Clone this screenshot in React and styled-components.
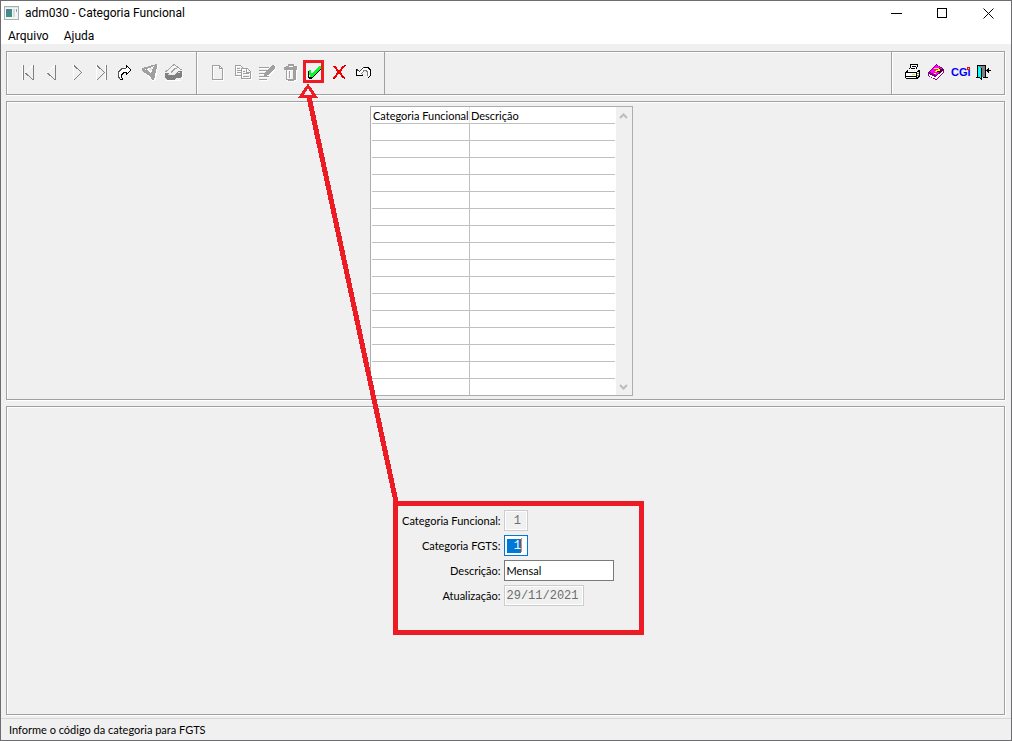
import React, { useEffect, useLayoutEffect, useRef, useState } from 'react'
import styled, { createGlobalStyle } from 'styled-components'

const LINHAS = 16

// desenho desabilitado: sombra branca deslocada por baixo do cinza
const Relevo = ({ children }) => (
    <>
        <g transform="translate(1 1)" color="#ffffff">{children}</g>
        <g color="#a0a0a0">{children}</g>
    </>
)

const Icone = ({ children }) => (
    <Svg width="24" height="24" viewBox="0 0 24 24" fill="none" shapeRendering="crispEdges" aria-hidden="true">
        {children}
    </Svg>
)

const IconePrimeiro = () => (
    <Icone>
        <path d="M6.5 5v15M17 5.5L9.5 12.5" stroke="#fff" />
        <path d="M7.5 5v15M17.5 5v15M9.5 13L17 20" stroke="#808080" />
    </Icone>
)

const IconeAnterior = () => (
    <Icone>
        <path d="M15 5.5L7.5 12.5" stroke="#fff" />
        <path d="M15.5 5v15M7.5 13L15 20" stroke="#808080" />
    </Icone>
)

const IconeProximo = () => (
    <Icone>
        <path d="M9.5 5v15" stroke="#fff" />
        <path d="M10 5.5L17.5 12.5L10 20" stroke="#808080" />
    </Icone>
)

const IconeUltimo = () => (
    <Icone>
        <path d="M8.5 5v15M17.5 5v15" stroke="#fff" />
        <path d="M9 5.5L16.5 12.5L9 20M18.5 5v15" stroke="#808080" />
    </Icone>
)

const IconeIr = () => (
    <Icone>
        <path d="M14 5L19 10L14 15V12H12L10 14V17L11 19L8 18L6 15V13L10 8H14Z" fill="#fff" />
        <path d="M14.5 8V5.5L19 10L14.5 14.5V12.5H12L9.5 15V17L11 19.5" stroke="#000" />
        <path d="M14 8.5H10L6.5 12V17L8 19" stroke="#555" />
        <path d="M8 19h3v1h-3z" fill="#000" />
    </Icone>
)

const IconeFiltro = () => (
    <Icone>
        <path d="M7 9L22 5L20 20L17 21L6 11Z" fill="#fff" />
        <path d="M6 8L21 4V7L18 20H16L15 17L6 11ZM11 9L15 14L17 7Z" fill="#a0a0a0" fillRule="evenodd" />
        <path d="M12 9L16 8L15 12Z" fill="#e4e4e4" />
        <path d="M9 9h1M12 8h1M15 7h1M17 6h1" stroke="#fff" />
    </Icone>
)

const IconeArquivo = () => (
    <Icone>
        <path d="M6 20h15v1H6zM22 12h1v7h-1z" fill="#fff" />
        <path d="M6 12L14 5L21 9L16 12H13L9 14Z" fill="#f4f4f4" />
        <path d="M5.5 12L14 4.5L21.5 10" stroke="#a0a0a0" />
        <path d="M11 12.5L15 8.5H17" stroke="#a0a0a0" />
        <path d="M5 13h3l2 2h4l4-4h4v6l-2 1h-4l-2 2H7l-2-2z" fill="#808080" />
        <path d="M8 14.5h2M18 12.5h2" stroke="#e0e0e0" />
    </Icone>
)

const IconeNovo = () => (
    <Icone>
        <Relevo>
            <path d="M7.5 5.5H14.5L17.5 8.5V19.5H7.5ZM14.5 5.5V8.5H17.5" stroke="currentColor" />
        </Relevo>
    </Icone>
)

const IconeCopiar = () => (
    <Icone>
        <Relevo>
            <path d="M12 15.5H6.5V5.5H11.5L14.5 8.5M8 8.5h3M8 10.5h4M8 12.5h4" stroke="currentColor" />
            <path d="M12.5 8.5H18.5L21.5 11.5V18.5H12.5ZM17.5 9V12.5H21M14 11.5h2M14 13.5h6M14 16.5h6" stroke="currentColor" />
        </Relevo>
    </Icone>
)

const IconeEditar = () => (
    <Icone>
        <Relevo>
            <path d="M6 7.5h10M6 10.5h8M6 13.5h6M6 16.5h10M6 19.5h8" stroke="currentColor" />
            <path d="M19 5L22 6V8L15 15L10 17L12 13Z" fill="currentColor" />
        </Relevo>
    </Icone>
)

const IconeExcluir = () => (
    <Icone>
        <Relevo>
            <path d="M11 4h6v2h3v4H7V7h2V6h2z" fill="currentColor" />
            <path d="M9.5 9V19.5H18.5V9M12.5 11v7M16.5 10v9M17.5 10v9" stroke="currentColor" />
            <path d="M11 19h6v2h-6z" fill="currentColor" />
        </Relevo>
        <path d="M12 6.5h4M10.5 11v7" stroke="#fff" />
    </Icone>
)

const IconeConfirmar = () => (
    <Icone>
        <path d="M7.5 11V17.5H11L20.5 8V6.5" stroke="#000" />
        <path d="M8 17h3v2H8z" fill="#000" />
        <path d="M8 11h2l1 3l7-8h2v2l-9 9H9z" fill="#00ff21" />
        <path d="M8 10h2v5H8z" fill="#00ff21" />
    </Icone>
)

const IconeCancelar = () => (
    <Icone>
        <path d="M9 6L19 18M19 6L9 18" stroke="#ee0000" strokeWidth="2" />
        <path d="M17 16L20 19M19 5.5h2M8 18.5h2" stroke="#a00000" />
    </Icone>
)

const IconeDesfazer = () => (
    <Icone>
        <path d="M8 9v6h6l-2-2l4-3l3 2v4l2-1v-5l-3-3h-3l-5 4z" fill="#fff" />
        <path d="M7.5 9V15.5H14M15 7.5H19L21.5 10V15L19.5 18" stroke="#000" />
        <path d="M8 9.5L10.5 11.5L14.5 7.5" stroke="#444" />
        <path d="M13.5 15L12.5 13.5L15 10.5H17.5L18.5 12.5V16" stroke="#808080" />
    </Icone>
)

const IconeImprimir = () => (
    <Icone>
        <path d="M11 5h7l-2 5H9zM6 11h12v7H6z" fill="#fff" />
        <path d="M9.5 9.5L11 4.5H17.5L16.5 9.5M12 6.5h4M11 8.5h4" stroke="#000" />
        <path d="M8 10.5L5.5 12.5V17.5L7 18.5H17L19.5 16V10.5H17.5M6 12.5H16.5L19 10.5M16.5 13V18M6 16.5h10" stroke="#000" />
        <path d="M12 14h3v1h-3z" fill="#e8e800" />
        <path d="M17 13h2v1h-2zM17 15h2v1h-2z" fill="#808080" />
    </Icone>
)

const IconeAjuda = () => (
    <Icone>
        <path d="M4 13L12 4L20 9V13L12 20L4 16Z" fill="#800080" />
        <path d="M6 12L12 5L19 9L12 15Z" fill="#ff00ff" />
        <path d="M5 14L11 17L19 11V13L12 19L5 16Z" fill="#fff" />
        <path d="M15 8L20 10L16 13L13 12Z" fill="#400040" />
        <path d="M10 8h5v1h1v2h-3v1h-2v-1h1v-1h2V9h-4zM10 13h2v1h-2z" fill="#ffff00" />
    </Icone>
)

const IconeCgi = () => (
    <Icone>
        <text
            x="3"
            y="16"
            fontFamily="'Liberation Sans', Arial, sans-serif"
            fontSize="11"
            fontWeight="700"
            fill="#0000ff"
        >
            CGi
        </text>
        <path d="M19 7h3v3h-3z" fill="#ff0000" />
        <path d="M20 8h1v1h-1z" fill="#ffd8d8" />
    </Icone>
)

const IconeSair = () => (
    <Icone>
        <path d="M5 5h9v12H5z" fill="#808080" />
        <path d="M6 6L9 8V19L6 17Z" fill="#00ffff" />
        <path d="M5.5 17V5.5H13.5V17M9.5 8V19L6 17M4 17.5h2M11 17.5h5M15 10.5h4" stroke="#000" />
        <path d="M14 10.5L17 8V13Z" fill="#000" />
    </Icone>
)

const NAVEGACAO = [
    ['Primeiro', IconePrimeiro],
    ['Anterior', IconeAnterior],
    ['Próximo', IconeProximo],
    ['Último', IconeUltimo],
    ['Ir para', IconeIr],
    ['Filtrar', IconeFiltro],
    ['Pesquisar', IconeArquivo],
]

const EDICAO = [
    ['Novo', IconeNovo],
    ['Copiar', IconeCopiar],
    ['Editar', IconeEditar],
    ['Excluir', IconeExcluir],
    ['Confirmar', IconeConfirmar],
    ['Cancelar', IconeCancelar],
    ['Desfazer', IconeDesfazer],
]

const SISTEMA = [
    ['Imprimir', IconeImprimir],
    ['Ajuda', IconeAjuda],
    ['CGI', IconeCgi],
    ['Sair', IconeSair],
]

const App = () => {
    const janela = useRef(null)
    const confirmar = useRef(null)
    const quadro = useRef(null)
    const campoFgts = useRef(null)
    const [seta, setSeta] = useState(null)

    // a seta liga o canto do quadro ao botão de confirmar
    useLayoutEffect(() => {
        const medir = () => {
            const j = janela.current.getBoundingClientRect()
            const c = confirmar.current.getBoundingClientRect()
            const q = quadro.current.getBoundingClientRect()
            setSeta({
                x1: c.left - j.left + 6,
                y1: c.bottom - j.top,
                x2: q.left - j.left + 3,
                y2: q.top - j.top + 2,
            })
        }
        medir()
        window.addEventListener('resize', medir)
        return () => window.removeEventListener('resize', medir)
    }, [])

    useEffect(() => {
        campoFgts.current.focus()
        campoFgts.current.select()
    }, [])

    return (
        <Janela ref={janela}>
            <EstiloGlobal />
            <BarraTitulo>
                <IconeJanela width="15" height="14" viewBox="0 0 15 14" shapeRendering="crispEdges" aria-hidden="true">
                    <path d="M0 0h15v14H0z" fill="#a9b0b0" />
                    <path d="M1 2h13v11H1z" fill="#f4f6f6" />
                    <path d="M1 1h13v1H1z" fill="#dfe6e6" />
                    <path d="M2 3h6v8H2z" fill="#3f8f86" />
                    <path d="M2 3h3v4H2z" fill="#4d7fa0" />
                    <path d="M9 3h2v8H9z" fill="#d5dedc" />
                    <path d="M12 3h1v3h-1z" fill="#7fa8c0" />
                </IconeJanela>
                <Titulo>adm030 - Categoria Funcional</Titulo>
                <BotaoJanela aria-label="Minimizar">
                    <svg width="11" height="11" shapeRendering="crispEdges"><path d="M0 5.5h11" stroke="#000" /></svg>
                </BotaoJanela>
                <BotaoJanela aria-label="Maximizar">
                    <svg width="11" height="11" shapeRendering="crispEdges"><path d="M.5.5h9v9h-9z" stroke="#000" fill="none" /></svg>
                </BotaoJanela>
                <BotaoJanela aria-label="Fechar">
                    <svg width="11" height="11"><path d="M.5.5l10 10M10.5.5l-10 10" stroke="#000" /></svg>
                </BotaoJanela>
            </BarraTitulo>

            <Menu>
                <ItemMenu>Arquivo</ItemMenu>
                <ItemMenu>Ajuda</ItemMenu>
            </Menu>

            <Corpo>
                <BarraFerramentas>
                    <Grupo>
                        {NAVEGACAO.map(([nome, Desenho]) => (
                            <BotaoIcone key={nome} aria-label={nome}><Desenho /></BotaoIcone>
                        ))}
                    </Grupo>
                    <Grupo>
                        {EDICAO.map(([nome, Desenho]) => (
                            <BotaoIcone
                                key={nome}
                                aria-label={nome}
                                ref={nome === 'Confirmar' ? confirmar : null}
                                $destaque={nome === 'Confirmar'}
                            >
                                <Desenho />
                            </BotaoIcone>
                        ))}
                    </Grupo>
                    <GrupoDireita>
                        {SISTEMA.map(([nome, Desenho]) => (
                            <BotaoIcone key={nome} aria-label={nome}><Desenho /></BotaoIcone>
                        ))}
                    </GrupoDireita>
                </BarraFerramentas>

                <PainelLista>
                    <Grade>
                        <Tabela>
                            <thead>
                                <tr>
                                    <Cabecalho $primeira>Categoria Funcional</Cabecalho>
                                    <Cabecalho>Descrição</Cabecalho>
                                </tr>
                            </thead>
                            <tbody>
                                {Array.from({ length: LINHAS }, (_, i) => (
                                    <tr key={i}>
                                        <Celula $ultima={i === LINHAS - 1} $primeira />
                                        <Celula $ultima={i === LINHAS - 1} />
                                    </tr>
                                ))}
                            </tbody>
                        </Tabela>
                        <Rolagem>
                            <BotaoRolagem aria-label="Subir">
                                <svg width="9" height="6"><path d="M1 5L4.5 1.5L8 5" stroke="#bcbcbc" strokeWidth="2" fill="none" /></svg>
                            </BotaoRolagem>
                            <BotaoRolagem aria-label="Descer">
                                <svg width="9" height="6"><path d="M1 1L4.5 4.5L8 1" stroke="#bcbcbc" strokeWidth="2" fill="none" /></svg>
                            </BotaoRolagem>
                        </Rolagem>
                    </Grade>
                </PainelLista>

                <PainelFormulario>
                    <Quadro ref={quadro}>
                        <Label htmlFor="categoria">Categoria Funcional:</Label>
                        <Input id="categoria" $largura={24} $mono defaultValue=" 1" disabled />

                        <Label htmlFor="fgts">Categoria FGTS:</Label>
                        <CampoFoco>
                            <Input id="fgts" ref={campoFgts} $largura={24} $mono $foco defaultValue=" 1" />
                            <Cursor />
                        </CampoFoco>

                        <Label htmlFor="descricao">Descrição:</Label>
                        <Input id="descricao" $largura={110} defaultValue="Mensal" />

                        <Label htmlFor="atualizacao">Atualização:</Label>
                        <Input id="atualizacao" $largura={80} $mono defaultValue="29/11/2021" disabled />
                    </Quadro>
                </PainelFormulario>
            </Corpo>

            <Rodape>Informe o código da categoria para FGTS</Rodape>

            {seta && (
                <Seta aria-hidden="true" shapeRendering="crispEdges">
                    <line x1={seta.x1 + 1} y1={seta.y1 + 12} x2={seta.x2} y2={seta.y2} stroke="#ed1c24" strokeWidth="5" />
                    <path
                        d={`M${seta.x1} ${seta.y1 + 1}l-7 10h14z`}
                        fill="#f0f0f0"
                        stroke="#ed1c24"
                        strokeWidth="3"
                    />
                </Seta>
            )}
        </Janela>
    )
}

const EstiloGlobal = createGlobalStyle`
* {
    box-sizing: border-box;
}
body {
    margin: 0;
    background: #f0f0f0;
    color: #000;
    font-family: Lato, "Liberation Sans", sans-serif;
    font-size: 11px;
}
button {
    padding: 0;
    border: 0;
    background: transparent;
    color: inherit;
}
`

const Janela = styled.div`
position: relative;
display: flex;
flex-direction: column;
min-height: 100vh;
border: 1px solid #6d6d6f;
background: #f0f0f0;
`

const BarraTitulo = styled.header`
display: flex;
align-items: center;
height: 24px;
padding-left: 3px;
background: #fff;
`

const IconeJanela = styled.svg`
display: block;
`

const Titulo = styled.h1`
flex: 1;
margin: 0 0 0 6px;
font: 400 12px Roboto, "Noto Sans", sans-serif;
`

const BotaoJanela = styled.button`
display: flex;
align-items: center;
justify-content: center;
width: 46px;
height: 24px;
`

const Menu = styled.nav`
display: flex;
gap: 15px;
height: 19px;
padding: 2px 0 0 7px;
background: #fff;
`

const ItemMenu = styled.button`
font: 400 12px Roboto, "Noto Sans", sans-serif;
`

const Corpo = styled.main`
flex: 1;
display: flex;
flex-direction: column;
gap: 6px;
padding: 7px 6px 3px 5px;
`

const Painel = styled.section`
display: flex;
justify-content: center;
border: 1px solid #a0a0a0;
box-shadow: 1px 1px 0 #fff, inset 1px 1px 0 #fff;
`

const BarraFerramentas = styled(Painel)`
justify-content: flex-start;
`

const Grupo = styled.div`
display: flex;
padding: 8px 12px 10px 9px;
border-right: 1px solid #a0a0a0;
box-shadow: inset 1px 1px 0 #fff;

&:nth-child(2) {
    padding-left: 8px;
    padding-right: 11px;
}
`

const GrupoDireita = styled.div`
display: flex;
margin-left: auto;
padding: 8px 8px 10px;
border-left: 1px solid #a0a0a0;
box-shadow: inset 1px 1px 0 #fff;
`

const BotaoIcone = styled.button`
position: relative;
display: block;
width: 24px;
height: 24px;

&::after {
    content: "";
    display: ${props => props.$destaque ? 'block' : 'none'};
    position: absolute;
    inset: 0 1px 1px 2px;
    border: 3px solid #ed1c24;
}
`

const Svg = styled.svg`
display: block;
`

const PainelLista = styled(Painel)`
padding: 4px 8px 3px 0;
`

const Grade = styled.div`
display: flex;
gap: 1px;
padding-left: 1px;
border: 1px solid #abadb3;
background: #fff;
`

const Tabela = styled.table`
width: 243px;
table-layout: fixed;
border-spacing: 0;
`

const Cabecalho = styled.th`
width: ${props => props.$primeira ? '98px' : 'auto'};
height: 17px;
padding: 1px 0 0 1px;
border-bottom: 1px solid #c0c0c0;
border-right: ${props => props.$primeira ? '1px solid #e4e4e4' : '0'};
font-weight: 400;
line-height: 15px;
text-align: left;
white-space: nowrap;
`

const Celula = styled.td`
height: ${props => props.$ultima ? '16px' : '17px'};
padding: 0;
border-bottom: ${props => props.$ultima ? '0' : '1px solid #c0c0c0'};
border-right: ${props => props.$primeira ? '1px solid #c0c0c0' : '0'};
`

const Rolagem = styled.div`
display: flex;
flex-direction: column;
justify-content: space-between;
width: 16px;
background: #f0f0f0;
`

const BotaoRolagem = styled.button`
display: flex;
align-items: center;
justify-content: center;
width: 15px;
height: 17px;
`

const PainelFormulario = styled(Painel)`
flex: 1;
align-items: flex-start;
padding: 94px 0 24px 25px;
`

const Quadro = styled.form`
display: grid;
grid-template-columns: 103px auto;
grid-auto-rows: 21px;
align-items: center;
gap: 4px 3px;
width: 251px;
padding: 4px 0 24px;
border: 5px solid #ed1c24;
`

const Label = styled.label`
text-align: right;
white-space: nowrap;
`

const Input = styled.input`
display: block;
width: ${props => props.$largura}px;
height: 21px;
padding: ${props => props.$mono ? '1px 2px 0' : '0 2px'};
border: 1px solid ${props => props.$foco ? '#0078d7' : '#7a7a7a'};
border-radius: 0;
outline: 0;
background: #fff;
color: #000;
font-family: ${props => props.$mono ? '"Liberation Mono", "Courier New", monospace' : 'Lato, "Liberation Sans", sans-serif'};
font-size: ${props => props.$mono ? '12px' : '11px'};

&:disabled {
    border-color: #ccc;
    background: #f0f0f0;
    box-shadow: inset 0 0 0 1px #fff;
    color: #6d6d6d;
}
&::selection {
    background: #0078d7;
    color: #fff;
}
`

const CampoFoco = styled.div`
position: relative;
width: 24px;
`

const Cursor = styled.span`
position: absolute;
top: 3px;
left: 17px;
width: 1px;
height: 14px;
background: #ff8728;
`

const Rodape = styled.footer`
height: 22px;
padding-left: 8px;
border-top: 1px solid #d7d7d7;
line-height: 21px;
`

const Seta = styled.svg`
position: absolute;
inset: 0;
width: 100%;
height: 100%;
pointer-events: none;
`

export default App
